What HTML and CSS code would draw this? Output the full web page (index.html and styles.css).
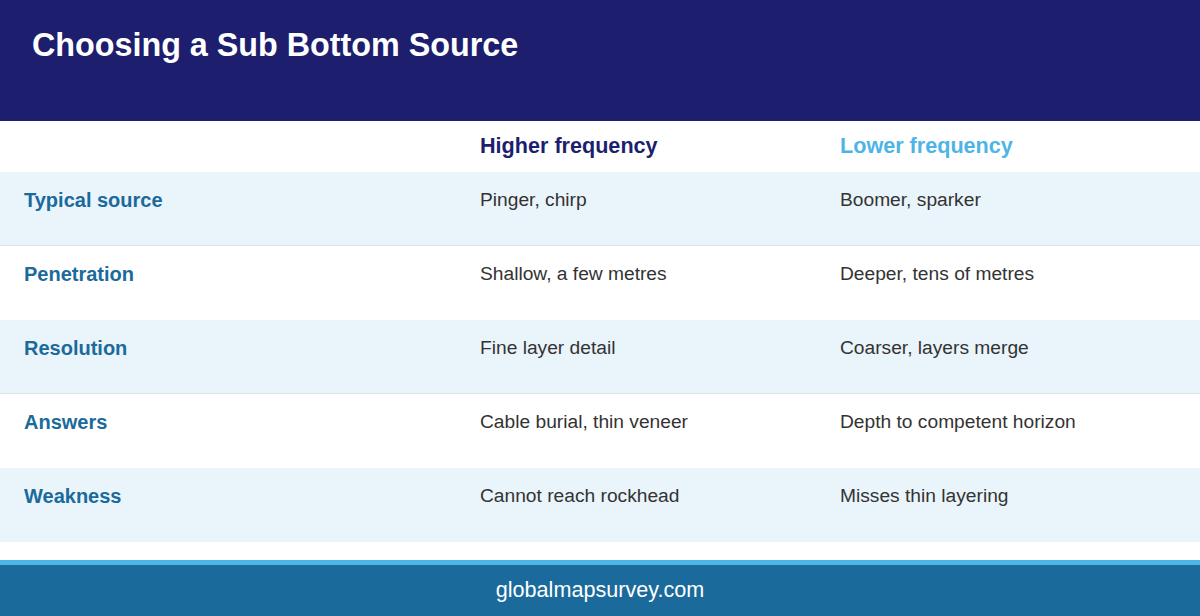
FILE: index.html
```html
<!DOCTYPE html>
<html lang="en">
<head>
<meta charset="utf-8">
<title>Choosing a Sub Bottom Source</title>
<link rel="stylesheet" href="styles.css">
</head>
<body>
<div class="page">
  <header class="hero">
    <h1 class="title">Choosing a Sub Bottom Source</h1>
  </header>
  <main class="table">
    <div class="row head">
      <div class="cell"></div>
      <div class="cell hi">Higher frequency</div>
      <div class="cell lo">Lower frequency</div>
    </div>
    <div class="row alt">
      <div class="cell label">Typical source</div>
      <div class="cell">Pinger, chirp</div>
      <div class="cell">Boomer, sparker</div>
    </div>
    <div class="row">
      <div class="cell label">Penetration</div>
      <div class="cell">Shallow, a few metres</div>
      <div class="cell">Deeper, tens of metres</div>
    </div>
    <div class="row alt">
      <div class="cell label">Resolution</div>
      <div class="cell">Fine layer detail</div>
      <div class="cell">Coarser, layers merge</div>
    </div>
    <div class="row">
      <div class="cell label">Answers</div>
      <div class="cell">Cable burial, thin veneer</div>
      <div class="cell">Depth to competent horizon</div>
    </div>
    <div class="row alt last">
      <div class="cell label">Weakness</div>
      <div class="cell">Cannot reach rockhead</div>
      <div class="cell">Misses thin layering</div>
    </div>
  </main>
  <footer class="foot">globalmapsurvey.com</footer>
</div>
</body>
</html>
```

FILE: styles.css
```css
* { box-sizing: border-box; }
html, body { margin: 0; padding: 0; }
body {
  font-family: "Liberation Sans", Arial, sans-serif;
  background: #ffffff;
  width: 1200px;
  height: 616px;
  overflow: hidden;
}
.page {
  display: flex;
  flex-direction: column;
  height: 616px;
}
.hero {
  background: #1d1f6e;
  height: 121px;
  padding: 21px 32px 0;
}
.title {
  margin: 0;
  color: #ffffff;
  font-size: 32.3px;
  font-weight: 700;
  line-height: 48px;
}
.table {
  display: flex;
  flex-direction: column;
}
.row {
  display: grid;
  grid-template-columns: 480px 360px 1fr;
  height: 74px;
  padding-top: 16px;
}
.row.head {
  height: 51px;
  padding-top: 12px;
}
.row.alt {
  background: #eaf4fb;
  border-bottom: 1px solid #dde4ea;
}
.row.last { border-bottom: none; }
.cell {
  font-size: 19.2px;
  line-height: 24px;
  color: #333333;
}
.cell.label {
  padding-left: 24px;
  font-size: 20px;
  font-weight: 700;
  color: #1a6a9b;
}
.cell.hi, .cell.lo {
  font-size: 21.6px;
  font-weight: 700;
  line-height: 26px;
}
.cell.hi { color: #1d1f6e; }
.cell.lo { color: #4db5e6; }
.foot {
  margin-top: auto;
  height: 56px;
  border-top: 5px solid #4db5e6;
  background: #1a6a9b;
  color: #ffffff;
  font-size: 21.6px;
  display: flex;
  align-items: center;
  justify-content: center;
  padding-bottom: 1px;
}
```
